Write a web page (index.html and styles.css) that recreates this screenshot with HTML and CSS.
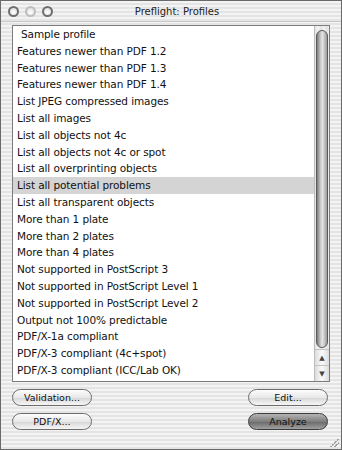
FILE: index.html
```html
<!DOCTYPE html>
<html lang="en">
  <head>
    <meta charset="UTF-8" />
    <title>Preflight: Profiles</title>
    <link rel="stylesheet" href="styles.css">
  </head>
  <body>
    <div class="window">
      <div class="titlebar">
        <div class="lights">
          <span class="light"></span>
          <span class="light off"></span>
          <span class="light"></span>
        </div>
        <div class="title">Preflight: Profiles</div>
      </div>

      <div class="list">
        <ul class="items">
          <li class="first">Sample profile</li>
          <li>Features newer than PDF 1.2</li>
          <li>Features newer than PDF 1.3</li>
          <li>Features newer than PDF 1.4</li>
          <li>List JPEG compressed images</li>
          <li>List all images</li>
          <li>List all objects not 4c</li>
          <li>List all objects not 4c or spot</li>
          <li>List all overprinting objects</li>
          <li class="selected">List all potential problems</li>
          <li>List all transparent objects</li>
          <li>More than 1 plate</li>
          <li>More than 2 plates</li>
          <li>More than 4 plates</li>
          <li>Not supported in PostScript 3</li>
          <li>Not supported in PostScript Level 1</li>
          <li>Not supported in PostScript Level 2</li>
          <li>Output not 100% predictable</li>
          <li>PDF/X-1a compliant</li>
          <li>PDF/X-3 compliant (4c+spot)</li>
          <li>PDF/X-3 compliant (ICC/Lab OK)</li>
        </ul>
        <div class="scrollbar">
          <div class="track">
            <div class="thumb"></div>
          </div>
          <div class="arrow">&#9650;</div>
          <div class="arrow">&#9660;</div>
        </div>
      </div>

      <div class="buttons">
        <button class="btn">Validation...</button>
        <button class="btn">Edit...</button>
        <button class="btn">PDF/X...</button>
        <button class="btn default">Analyze</button>
      </div>
      <div class="grip"></div>
    </div>
  </body>
</html>
```

FILE: styles.css
```css
* {
  margin: 0;
  padding: 0;
  box-sizing: border-box;
}
body {
  font-family: "DejaVu Sans", sans-serif;
  background: #fff;
}
.window {
  position: relative;
  width: 342px;
  height: 450px;
  border: 1px solid #6a6a6a;
  background: repeating-linear-gradient(180deg, #f3f3f3 0, #f3f3f3 2px, #e4e4e4 2px, #e4e4e4 4px);
}
.titlebar {
  height: 21px;
  display: flex;
  align-items: center;
  position: relative;
  border-bottom: 1px solid #c8c8c8;
}
.lights {
  display: flex;
  gap: 6px;
  padding-left: 7px;
}
.light {
  width: 11px;
  height: 11px;
  border-radius: 50%;
  border: 2px solid #6e6e6e;
  background: radial-gradient(circle at 50% 65%, #fff, #d8d8d8);
}
.light.off {
  border-color: #bdbdbd;
}
.title {
  flex: 1;
  text-align: center;
  font-size: 10px;
  color: #222;
  margin-left: -40px;
}
.list {
  display: flex;
  height: 357px;
  margin: 3px 11px 0 11px;
  border: 1px solid #7c7c7c;
  background: #fff;
}
.items {
  flex: 1;
  list-style: none;
  font-size: 10.5px;
  letter-spacing: -0.1px;
  color: #111;
}
.items li {
  height: 16.8px;
  line-height: 16.8px;
  padding-left: 4px;
  white-space: nowrap;
}
.items li.first {
  padding-left: 8px;
}
.items li.selected {
  background: #d4d4d4;
}
.scrollbar {
  width: 15px;
  display: flex;
  flex-direction: column;
  border-left: 1px solid #bcbcbc;
  background: repeating-linear-gradient(90deg, #e2e2e2 0, #f4f4f4 3px, #e2e2e2 6px);
}
.track {
  flex: 1;
  padding: 4px 1px 0 1px;
}
.thumb {
  height: 318px;
  border-radius: 7px;
  border: 1px solid #5a5a5a;
  background: linear-gradient(90deg, #7a7a7a, #c8c8c8 35%, #e4e4e4 55%, #9a9a9a);
}
.arrow {
  height: 16px;
  font-size: 7px;
  line-height: 16px;
  text-align: center;
  color: #444;
  border-top: 1px solid #c4c4c4;
  background: linear-gradient(90deg, #dcdcdc, #fafafa 50%, #dcdcdc);
}
.buttons {
  display: grid;
  grid-template-columns: 80px 80px;
  justify-content: space-between;
  row-gap: 7px;
  padding: 7px 13px 0 11px;
}
.btn {
  height: 17px;
  border-radius: 9px;
  border: 1px solid #6c6c6c;
  font-family: "DejaVu Sans", sans-serif;
  font-size: 9.5px;
  color: #111;
  background: linear-gradient(180deg, #fdfdfd, #e8e8e8 50%, #d6d6d6 51%, #f6f6f6);
}
.btn.default {
  border-color: #3c3c3c;
  background: linear-gradient(180deg, #b4b4b4, #7e7e7e 50%, #686868 51%, #a0a0a0);
  color: #111;
}
.grip {
  position: absolute;
  right: 2px;
  bottom: 2px;
  width: 10px;
  height: 10px;
  background: linear-gradient(135deg, transparent 55%, #a0a0a0 55%, #a0a0a0 62%, transparent 62%, transparent 75%, #a0a0a0 75%, #a0a0a0 82%, transparent 82%);
}
```
